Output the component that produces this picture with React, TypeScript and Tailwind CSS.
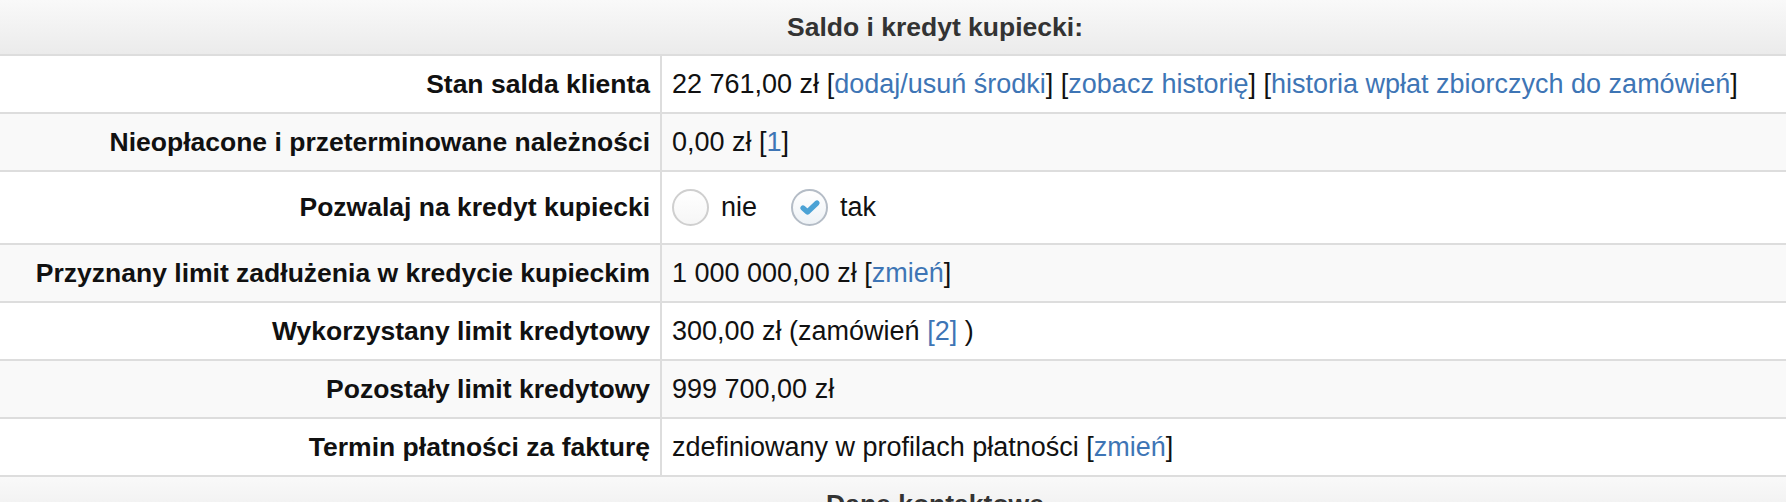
import React from "react";

/* ------------------------------------------------------------------ */
/*  Small pieces                                                        */
/* ------------------------------------------------------------------ */
function Link({ children }: { children: React.ReactNode }) {
  return <a className="cursor-pointer text-[#3e75b5] no-underline">{children}</a>;
}

function Bracket({ children }: { children: React.ReactNode }) {
  return (
    <>
      [<Link>{children}</Link>]
    </>
  );
}

function Radio({ checked, label }: { checked?: boolean; label: string }) {
  return (
    <label className="flex cursor-pointer items-center gap-[12px]">
      <span
        className={
          checked
            ? "flex h-[37px] w-[37px] items-center justify-center rounded-full border-2 border-[#b4bcc6] bg-[linear-gradient(180deg,#ffffff_0%,#eef2f6_100%)]"
            : "flex h-[37px] w-[37px] items-center justify-center rounded-full border-2 border-[#cfcfcf] bg-[linear-gradient(180deg,#ffffff_0%,#f6f6f6_100%)]"
        }
      >
        {checked && (
          <svg width="22" height="17" viewBox="0 0 22 17" aria-hidden="true">
            <path
              d="M4 9 L8.5 13 L18 4"
              fill="none"
              stroke="#4ba2d5"
              strokeWidth="5.2"
              strokeLinecap="round"
              strokeLinejoin="round"
            />
          </svg>
        )}
      </span>
      <span>{label}</span>
    </label>
  );
}

interface RowProps {
  label: string;
  children: React.ReactNode;
  striped?: boolean;
  tall?: boolean;
}

function Row({ label, children, striped, tall }: RowProps) {
  return (
    <div
      className={
        "flex border-b-2 border-[#dddddd] " +
        (striped ? "bg-[#f9f9f9] " : "bg-white ") +
        (tall ? "h-[73px]" : "h-[58px]")
      }
    >
      <div className="flex w-[662px] shrink-0 items-center justify-end border-r-2 border-[#dddddd] pr-[10px] text-[26.5px] font-bold text-[#111]">
        {label}
      </div>
      <div className="flex items-center pl-[10px] text-[#111]">{children}</div>
    </div>
  );
}

function SectionHeader({ title }: { title: string }) {
  return (
    <div className="flex h-[56px] items-center justify-center border-b-2 border-[#dddddd] bg-[linear-gradient(180deg,#f9f9f9_0%,#ebebeb_100%)] pl-[84px] text-[26.5px] font-bold text-[#333]">
      {title}
    </div>
  );
}

/* ------------------------------------------------------------------ */
/*  App                                                                 */
/* ------------------------------------------------------------------ */
export default function App() {
  return (
    <div className="h-[502px] w-[1786px] overflow-hidden bg-white font-['Liberation_Sans',Arial,sans-serif] text-[27px] leading-none">
      <SectionHeader title="Saldo i kredyt kupiecki:" />

      <Row label="Stan salda klienta">
        <span className="whitespace-pre">
          22 761,00 zł <Bracket>dodaj/usuń środki</Bracket>{" "}
          <Bracket>zobacz historię</Bracket>{" "}
          <Bracket>historia wpłat zbiorczych do zamówień</Bracket>
        </span>
      </Row>

      <Row label="Nieopłacone i przeterminowane należności" striped>
        <span className="whitespace-pre">
          0,00 zł <Bracket>1</Bracket>
        </span>
      </Row>

      <Row label="Pozwalaj na kredyt kupiecki" tall>
        <div className="flex items-center gap-[34px]">
          <Radio label="nie" />
          <Radio label="tak" checked />
        </div>
      </Row>

      <Row label="Przyznany limit zadłużenia w kredycie kupieckim" striped>
        <span className="whitespace-pre">
          1 000 000,00 zł <Bracket>zmień</Bracket>
        </span>
      </Row>

      <Row label="Wykorzystany limit kredytowy">
        <span className="whitespace-pre">
          300,00 zł (zamówień <Link>[2]</Link> )
        </span>
      </Row>

      <Row label="Pozostały limit kredytowy" striped>
        <span className="whitespace-pre">999 700,00 zł</span>
      </Row>

      <Row label="Termin płatności za fakturę">
        <span className="whitespace-pre">
          zdefiniowany w profilach płatności <Bracket>zmień</Bracket>
        </span>
      </Row>

      <SectionHeader title="Dane kontaktowe" />
    </div>
  );
}
